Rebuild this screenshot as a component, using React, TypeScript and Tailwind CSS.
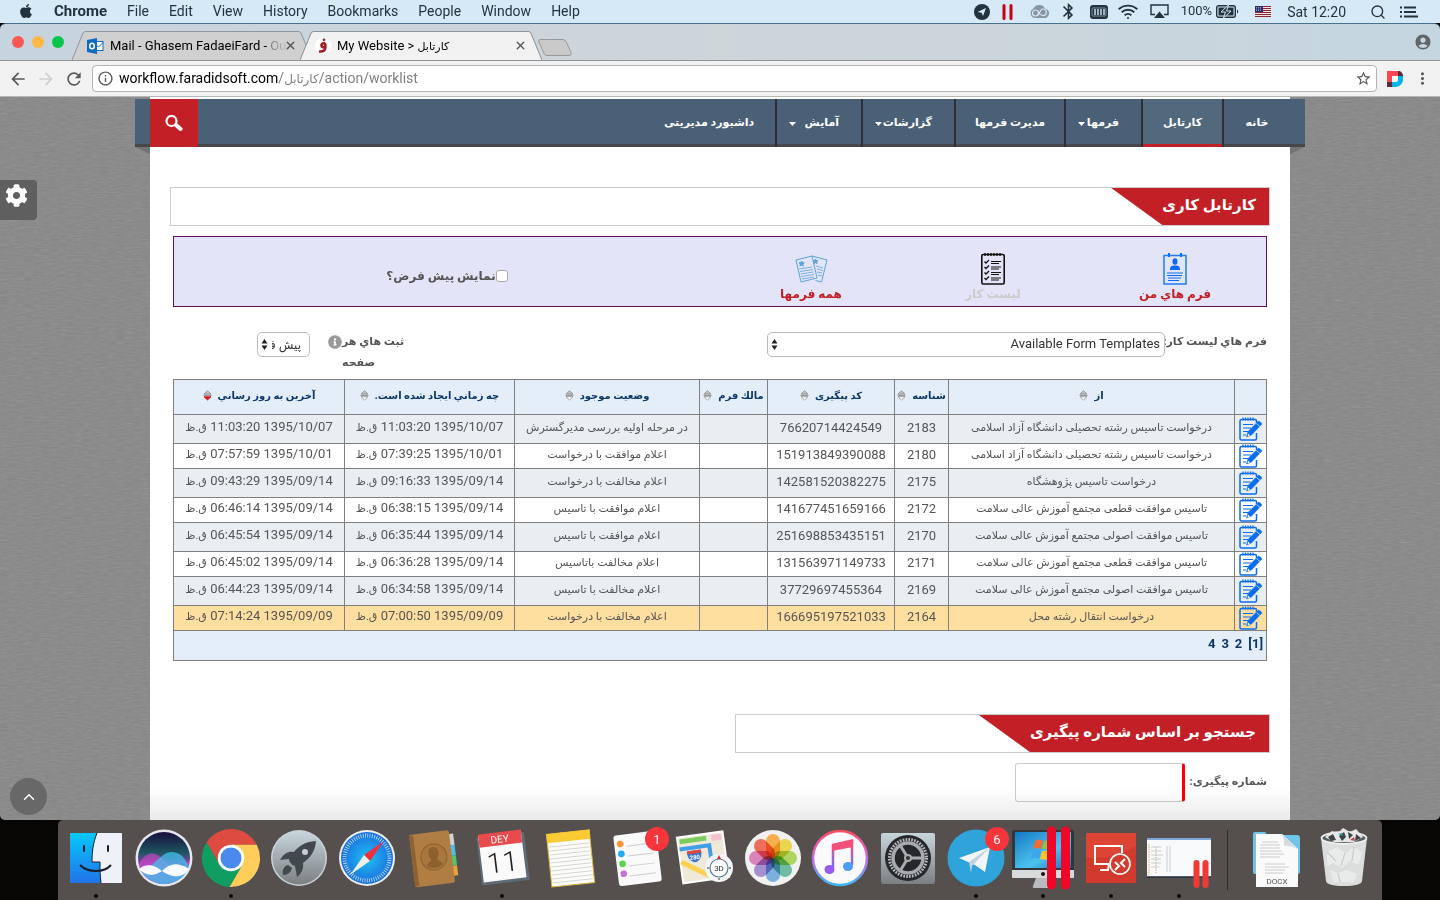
import type { ReactNode } from "react";
import { FaApple, FaCog, FaInfoCircle } from "react-icons/fa";
import {
  MdAccountCircle,
  MdArrowBack,
  MdArrowForward,
  MdBluetooth,
  MdInfoOutline,
  MdMoreVert,
  MdRefresh,
  MdStarBorder,
} from "react-icons/md";
import { ChevronUp, Search, X } from "lucide-react";

const menus = ["File", "Edit", "View", "History", "Bookmarks", "People", "Window", "Help"];

const navItems = [
  { label: "خانه", width: "w-[83px]" },
  { label: "کارتابل", width: "w-[81px]", active: true },
  { label: "فرمها", width: "w-[77px]", menu: true },
  { label: "مدیرت فرمها", width: "w-[110px]" },
  { label: "گزارشات", width: "w-[93px]", menu: true },
  { label: "آمایش", width: "w-[86px]", menu: true },
  { label: "داشبورد مدیریتی", width: "w-[132px]" },
];

const columns = [
  { title: "", width: "w-[32px]" },
  { title: "از", width: "" },
  { title: "شناسه", width: "w-[54px]" },
  { title: "کد پیگیری", width: "w-[127px]" },
  { title: "مالك فرم", width: "w-[68px]" },
  { title: "وضعيت موجود", width: "w-[185px]" },
  { title: "چه زماني ايجاد شده است.", width: "w-[170px]" },
  { title: "آخرين به روز رساني", width: "w-[171px]", sorted: true },
];

const rows = [
  ["درخواست تاسیس رشته تحصیلی دانشگاه آزاد اسلامی", "2183", "76620714424549", "در مرحله اولیه بررسی مدیرگسترش", "1395/10/07 11:03:20", "1395/10/07 11:03:20"],
  ["درخواست تاسیس رشته تحصیلی دانشگاه آزاد اسلامی", "2180", "151913849390088", "اعلام موافقت با درخواست", "1395/10/01 07:39:25", "1395/10/01 07:57:59"],
  ["درخواست تاسیس پژوهشگاه", "2175", "142581520382275", "اعلام مخالفت با درخواست", "1395/09/14 09:16:33", "1395/09/14 09:43:29"],
  ["تاسیس موافقت قطعی مجتمع آموزش عالی سلامت", "2172", "141677451659166", "اعلام موافقت با تاسیس", "1395/09/14 06:38:15", "1395/09/14 06:46:14"],
  ["تاسیس موافقت اصولی مجتمع آموزش عالی سلامت", "2170", "251698853435151", "اعلام موافقت با تاسیس", "1395/09/14 06:35:44", "1395/09/14 06:45:54"],
  ["تاسیس موافقت قطعی مجتمع آموزش عالی سلامت", "2171", "131563971149733", "اعلام مخالفت باتاسیس", "1395/09/14 06:36:28", "1395/09/14 06:45:02"],
  ["تاسیس موافقت اصولی مجتمع آموزش عالی سلامت", "2169", "37729697455364", "اعلام مخالفت با تاسیس", "1395/09/14 06:34:58", "1395/09/14 06:44:23"],
  ["درخواست انتقال رشته محل", "2164", "166695197521033", "اعلام مخالفت با درخواست", "1395/09/09 07:00:50", "1395/09/09 07:14:24"],
];

/* ---------- menu bar ---------- */

const MenuBar = () => (
  <header className="flex h-[23px] shrink-0 items-center justify-between bg-[#d6e9f6] pr-[22px] pl-[18px] text-sm text-[#22333f]">
    <div className="flex items-center gap-5">
      <FaApple size={16} />
      <span className="text-[15px] font-bold">Chrome</span>
      {menus.map((menu) => (
        <span key={menu}>{menu}</span>
      ))}
    </div>
    <div className="flex items-center">
      <svg width="16" height="16" viewBox="0 0 16 16">
        <circle cx="8" cy="8" r="8" fill="#22333f" />
        <path d="M3.6 8 12 4 9 12 7.6 8.8Z" fill="#d6e9f6" />
      </svg>
      <svg className="ml-3" width="11" height="16" viewBox="0 0 11 16">
        <path d="M2 1.5v13M9 1.5v13" stroke="#c80010" strokeWidth="3" strokeLinecap="round" />
      </svg>
      <svg className="ml-4" width="20" height="14" viewBox="0 0 20 14" fill="none">
        <path d="M6 13a5 5 0 0 1-1.500-9.500A6.500 6.500 0 0 1 16 3.500a4.800 4.800 0 0 1-1.500 9.500Z" fill="#8695a1" />
        <circle cx="6.500" cy="8" r="3" stroke="#d6e9f6" strokeWidth="1.200" />
        <path d="M8 10.500c3 0 2-6.500 6-6.500a3.300 3.300 0 1 1 0 6.600c-2 0-3-1.200-4-2.600" stroke="#d6e9f6" strokeWidth="1.200" />
      </svg>
      <MdBluetooth className="ml-2.5" size={19} />
      <svg className="ml-3" width="18" height="14" viewBox="0 0 18 14">
        <rect width="18" height="14" rx="3" fill="#22333f" />
        <rect x="2" y="3" width="14" height="8" rx="1" fill="none" stroke="#8fa3b1" strokeWidth=".8" />
        <path d="M5 4v6M8 4v6M11 4v6M14 4v6" stroke="#d6e9f6" strokeWidth="1.400" />
      </svg>
      <svg className="ml-2.5" width="20" height="16" viewBox="0 0 20 16" fill="none" stroke="#22333f" strokeWidth="1.900">
        <path d="M.7 5.300a13.500 13.500 0 0 1 18.600 0M3.700 8.300a9.200 9.200 0 0 1 12.600 0M6.700 11.200a4.900 4.900 0 0 1 6.600 0" />
        <circle cx="10" cy="14" r="1" fill="#22333f" stroke="none" />
      </svg>
      <svg className="ml-3" width="19" height="15" viewBox="0 0 19 15">
        <path d="M5 10.500H1V1h17v9.500h-4" fill="none" stroke="#22333f" strokeWidth="1.400" />
        <path d="M9.500 7.500 15 14H4Z" fill="#22333f" />
      </svg>
      <span className="ml-3 text-[13px]">100%</span>
      <svg className="ml-1" width="23" height="13" viewBox="0 0 23 13">
        <rect x=".7" y=".7" width="18.600" height="11.600" rx="2" fill="none" stroke="#22333f" strokeWidth="1.400" />
        <rect x="2.500" y="2.500" width="15" height="8" fill="#22333f" />
        <path d="M12.500 0 5 7h4.500L7.500 13 15 6h-4.500Z" fill="#22333f" stroke="#d6e9f6" strokeWidth="1" />
        <path d="M21 4.500v4c1.500-.5 1.500-3.500 0-4" fill="#22333f" />
      </svg>
      <svg className="ml-4" width="16" height="11" viewBox="0 0 16 11">
        <rect width="16" height="11" fill="#f3e4e6" />
        <path d="M0 .5h16M0 2.500h16M0 4.500h16M0 6.500h16M0 8.500h16M0 10.500h16" stroke="#8d2634" />
        <rect width="8" height="6" fill="#2b2f6b" />
        <path d="M1 1.500h6M1 3h6M1 4.500h6" stroke="#c9cbe6" strokeWidth=".7" strokeDasharray="1 1" />
      </svg>
      <span className="ml-4">Sat 12:20</span>
      <Search className="ml-6" size={16} strokeWidth={2} />
      <svg className="ml-3.5" width="18" height="12" viewBox="0 0 18 12" stroke="#22333f" strokeWidth="1.800">
        <path d="M0 1.500h2M4 1.500h12M0 6h2M4 6h12M0 10.500h2M4 10.500h14" />
      </svg>
    </div>
  </header>
);

/* ---------- browser chrome ---------- */

const BrowserTab = ({ active, icon, children }: { active?: boolean; icon: ReactNode; children: ReactNode }) => (
  <div className={active ? "relative z-10 -ml-3 h-[29px] w-[242px]" : "relative h-[29px] w-[240px]"}>
    <svg className="absolute inset-0 h-full w-full" viewBox="0 0 240 29" preserveAspectRatio="none">
      <path d="M0 29 11 2Q12 .5 14 .5H226Q228 .5 229 2L240 29" fill={active ? "#f2f2f2" : "#d0d0d0"} stroke="#8f9498" />
    </svg>
    <div className="relative flex h-full items-center gap-1.5 px-[15px] text-[13px] whitespace-nowrap text-black">
      {icon}
      <span className="min-w-0 flex-1">{children}</span>
      <button aria-label="Close tab" className="text-[#555]">
        <X size={13} strokeWidth={2.5} />
      </button>
    </div>
  </div>
);

const OutlookIcon = () => (
  <svg className="shrink-0" width="17" height="16" viewBox="0 0 17 16">
    <rect x="8" y="3.500" width="8" height="9" fill="#fff" stroke="#0a6cc0" />
    <path d="m9 7 2.500 2L16 4.500" fill="none" stroke="#0a6cc0" />
    <path d="M0 2 10 0v16L0 14Z" fill="#0a6cc0" />
    <ellipse cx="5" cy="8" rx="2.300" ry="2.800" fill="none" stroke="#fff" strokeWidth="1.500" />
  </svg>
);

const SiteIcon = () => (
  <svg className="shrink-0" width="16" height="16" viewBox="0 0 16 16">
    <circle cx="8" cy="8" r="8" fill="#fff" />
    <path d="M10 8.500a2 2 0 1 1 .3-2C11 12 9 14 4 13.500" fill="none" stroke="#a31d21" strokeWidth="2.600" />
    <circle cx="9" cy="1.800" r="1.400" fill="#a31d21" />
  </svg>
);

const BrowserChrome = () => (
  <div className="shrink-0">
    <div className="flex h-[37px] items-end rounded-t-md border-t border-[#4a708f] bg-linear-to-r from-[#c6d4df] via-[#cfd5d9] to-[#c5d6e0]">
      <div className="flex gap-2 self-center pl-3">
        <button aria-label="Close window" className="size-3 rounded-full bg-[#fc5753]" />
        <button aria-label="Minimize window" className="size-3 rounded-full bg-[#fdb84a]" />
        <button aria-label="Zoom window" className="size-3 rounded-full bg-[#05c64c]" />
      </div>
      <div className="ml-2 flex items-end">
        <BrowserTab icon={<OutlookIcon />}>
          Mail - Ghasem FadaeiFard - <span className="bg-linear-to-r from-[#777] to-[#c4c4c4] bg-clip-text text-transparent">Ou</span>
        </BrowserTab>
        <BrowserTab active icon={<SiteIcon />}>
          My Website &gt; <span dir="rtl" className="text-[11px]">کارتابل</span>
        </BrowserTab>
        <button aria-label="New tab" className="-ml-1 mb-1">
          <svg width="34" height="17" viewBox="0 0 34 17">
            <path d="M2 .5h23q2 0 3 2l5 11q1 3-2 3H9q-2 0-3-2L1 3Q0 .5 2 .5Z" fill="#cacaca" stroke="#969a9d" />
          </svg>
        </button>
      </div>
      <MdAccountCircle className="mr-2 ml-auto self-center text-[#626668]" size={18} />
    </div>
    <div className="flex h-[37px] items-center border-y border-t-[#8f9498] border-b-[#b6b6b6] bg-[#f2f2f2] px-2 text-[#5a5a5a]">
      <button aria-label="Back"><MdArrowBack size={20} /></button>
      <button aria-label="Forward" className="ml-2 text-[#d0d0d0]"><MdArrowForward size={20} /></button>
      <button aria-label="Reload" className="ml-2"><MdRefresh size={20} /></button>
      <div className="ml-2 flex h-[27px] flex-1 items-center rounded border border-[#b4b4b4] bg-white px-1">
        <MdInfoOutline size={17} />
        <span className="ml-[5px] flex-1 text-[14px] text-[#808080]">
          <span className="text-black">workflow.faradidsoft.com</span>/<span className="text-[12px]">کارتابل</span>/action/worklist
        </span>
        <MdStarBorder size={17} />
      </div>
      <svg className="ml-2.5" width="16" height="16" viewBox="0 0 16 16">
        <path d="M0 0h11v6H5v6H0Z" fill="#f9484f" />
        <path d="M11 0c3 0 5 2 5 5h-5Z" fill="#5b2b31" />
        <path d="M0 11h5v5H0Z" fill="#5b2b31" />
        <path d="M5 16v-5h3q3 0 3-3V5h5c1 6-2 11-8 11Z" fill="#00b4ea" />
        <path d="M5 5h6v3q0 3-3 3H5Z" fill="#fff" />
      </svg>
      <button aria-label="Browser menu" className="ml-2.5"><MdMoreVert size={19} /></button>
    </div>
  </div>
);

/* ---------- page ---------- */

const Caret = () => (
  <svg className="shrink-0" width="7" height="4" viewBox="0 0 7 4" fill="currentColor">
    <path d="M0 0h7L3.500 4Z" />
  </svg>
);

const SiteNav = () => (
  <nav className="relative mx-auto w-full max-w-[1170px]">
    <div className="flex h-12 justify-between border-b-[3px] border-[#47474b] bg-[#4a6076] pl-[15px]">
      <ul className="flex h-12 text-[11px] font-bold text-white">
        {navItems.map((item, i) => (
          <li
            key={item.label}
            className={`${item.width} ${i < 6 ? "border-l-2 border-[#2b2f36]" : ""} ${
              item.active ? "bg-[#52687d]" : ""
            } ${i === 0 ? "pr-[15px]" : ""}`}
          >
            <a
              href="#"
              className={`flex h-12 items-center border-b-[3px] pt-1 ${
                item.active ? "border-[#c22026]" : "border-[#47474b]"
              } ${item.menu ? "justify-between pr-[22px] pl-3" : "justify-center"}`}
            >
              <span className="whitespace-nowrap">{item.label}</span>
              {item.menu && <Caret />}
            </a>
          </li>
        ))}
      </ul>
      <button aria-label="جستجو" className="grid size-12 place-items-center bg-[#c22026]">
        <svg width="18" height="17" viewBox="0 0 18 17" fill="none" stroke="#fff">
          <circle cx="6.500" cy="6" r="5" strokeWidth="2.200" />
          <path d="m11 10 4.500 4" strokeWidth="4" strokeLinecap="round" />
        </svg>
      </button>
    </div>
    {/* folded ribbon ends */}
    <div className="flex justify-between text-[#737375]">
      <svg width="15" height="7" viewBox="0 0 15 7" fill="currentColor"><path d="M0 0h15L0 7Z" /></svg>
      <svg width="15" height="7" viewBox="0 0 15 7" fill="currentColor"><path d="M0 0h15v7Z" /></svg>
    </div>
  </nav>
);

const SectionTitle = ({ children }: { children: ReactNode }) => (
  <div className="flex h-[39px] border border-[#ccc] bg-white">
    <h2 className="flex items-center bg-[#c22026] pr-[13px] pb-0.5 pl-[51px] text-[15px] font-bold whitespace-nowrap text-white [clip-path:polygon(0_0,100%_0,100%_100%,51px_100%)]">
      {children}
    </h2>
  </div>
);

const MyFormsIcon = () => (
  <svg width="24" height="33" viewBox="0 0 24 33" fill="#0a6cf0">
    <path d="M1 3.500h22V32H1Z" fill="none" stroke="#1f7cf2" strokeWidth="1.500" />
    <rect x="5" y="1" width="2" height="4" />
    <rect x="17" y="1" width="2" height="4" />
    <ellipse cx="12" cy="9.500" rx="2.500" ry="3.200" />
    <path d="M7 18c0-4 2-4.500 5-4.500s5 .5 5 4.500Z" />
    <path d="M4 21h16M4 23.500h15M5 26h13M5 28.500h11" stroke="#0a6cf0" strokeWidth="1.200" />
  </svg>
);

const WorkListIcon = () => (
  <svg width="24" height="33" viewBox="0 0 24 33" fill="none" stroke="#111">
    <rect x=".8" y="2.500" width="22.400" height="29.500" rx="1.500" strokeWidth="1.600" />
    <path d="M4 1v3M7 1v3M10 1v3M13 1v3M16 1v3M19 1v3" strokeWidth="1.400" />
    <path d="m3.500 9.500 1.500 1.500 3-3M3.500 15l1.500 1.500 3-3M3.500 20.500 5 22l3-3M3.500 26 5 27.500l3-3" strokeWidth="1.300" />
    <path d="M10 9.500h10M10 11.500h8M10 15h10M10 17h8M10 20.500h10M10 22.500h8M10 26h10M10 28h8" strokeWidth="1.100" />
  </svg>
);

const AllFormsIcon = () => (
  <svg width="33" height="33" viewBox="0 0 33 33" fill="none" stroke="#5ba3d6" strokeWidth="1">
    <path d="m1 8 16-4 5 22-16 4Z" />
    <path d="m17 4 15 4-5.500 22-6-1.500" />
    <path d="m4 17 13-2M5 19.500l13-2M5.500 22l13-2M6 24.500l13-2M7 27l12-2M21 14l7 2M22 17l6 1.500M22 20l5 1M23 23l4 1" strokeWidth=".8" />
    <path d="m6.500 9 .8 1.700 2 .1-1.500 1.300.5 2-1.700-1-1.700 1 .5-2L4 10.800l1.800-.1Z" fill="#5ba3d6" />
    <path d="m20.500 7 .7 1.500 1.800.2-1.400 1.200.4 1.700-1.500-.9-1.500.9.400-1.700-1.400-1.200 1.800-.2Z" fill="#5ba3d6" />
  </svg>
);

const EditIcon = () => (
  <svg className="mx-auto block" width="24" height="24" viewBox="0 0 24 24" fill="none" stroke="#0a6cf0">
    <path d="M17.500 16v5.500q0 1.500-1.500 1.500H2.500Q1 23 1 21.500V4q0-1.500 1.500-1.500H16q1.500 0 1.500 1.500v2" strokeWidth="1.500" />
    <path d="M4 .5v3M6.500.5v3M9 .5v3M11.500.5v3M14 .5v3" strokeWidth="1.200" />
    <path d="M4 7.500h10M4 11h8M4 14.500h5M4 18h3" strokeWidth="1.200" />
    <path d="m7.500 20 1.500-5.500L19.500 4q2 .5 3.500 3L12.500 18Z" fill="#0a6cf0" strokeWidth=".5" />
    <path d="m17.500 6.500 3.500 3" stroke="#fff" strokeWidth=".7" />
    <path d="m9 16.500 2 2-2.300.7Z" fill="#fff" stroke="none" />
  </svg>
);

const SortIcon = ({ sorted }: { sorted?: boolean }) => (
  <svg className="mr-1.5 inline-block" width="9" height="11" viewBox="0 0 9 11">
    <path d="M4.500.7 8 4H1Z" fill="#c4c4c4" stroke="#8c8c8c" strokeWidth=".8" />
    <path d="M.5 5.300h8" stroke="#777" strokeWidth=".9" />
    <path d="M1 6.700h7l-3.500 3.300Z" fill={sorted ? "#e01010" : "#fff"} stroke={sorted ? "#e01010" : "#8c8c8c"} strokeWidth=".8" />
  </svg>
);

const SelectArrows = () => (
  <svg className="pointer-events-none absolute top-[7px] left-1" width="7" height="11" viewBox="0 0 7 11" fill="#222">
    <path d="m3.500 0 3 4.500h-6ZM3.500 11l3-4.500h-6Z" />
  </svg>
);

const Toolbar = () => (
  <div className="mx-[3px] mt-2.5 grid h-[71px] grid-cols-6 border border-[#5b1160] bg-[#e4e4f9] text-[12px] font-bold">
    <a href="#" className="flex flex-col items-center pt-[15px] text-[#c22026]">
      <MyFormsIcon />
      <span className="leading-[18px]">فرم هاي من</span>
    </a>
    <a href="#" className="flex flex-col items-center pt-[15px] text-[#ccc]">
      <WorkListIcon />
      <span className="leading-[18px]">ليست كار</span>
    </a>
    <a href="#" className="flex flex-col items-center pt-[15px] text-[#c22026]">
      <AllFormsIcon />
      <span className="leading-[18px]">همه فرمها</span>
    </a>
    <div />
    <label className="flex items-center justify-center pt-2 whitespace-nowrap text-[#555]">
      <input type="checkbox" className="size-3 appearance-none rounded-[3px] border border-[#aaa] bg-white" />
      نمایش پیش فرض؟
    </label>
  </div>
);

const Filters = () => (
  <div className="mx-[3px] mt-6 flex h-12 items-start text-[11px] text-[#555]">
    <label htmlFor="templates" className="w-[102px] leading-[21px] font-bold whitespace-nowrap">فرم هاي ليست كار:</label>
    <div className="relative mt-px w-[398px]">
      <select id="templates" className="h-[25px] w-full appearance-none rounded-[5px] border border-[#bbb] bg-white pr-1 pb-px pl-4 text-[13px] text-[#333]">
        <option>Available Form Templates</option>
      </select>
      <SelectArrows />
    </div>
    <div className="flex-1" />
    <label htmlFor="page-size" className="w-[66px] text-left leading-[21px] font-bold">ثبت هاي هر صفحه</label>
    <FaInfoCircle className="mt-1 shrink-0 text-[#999]" size={14} />
    <div className="relative mt-px mr-[18px] ml-[84px] w-[53px]">
      <select id="page-size" className="h-[25px] w-full appearance-none rounded-[5px] border border-[#bbb] bg-white pr-2 pl-3.5 text-[12px] text-[#333]">
        <option>پیش فرض</option>
      </select>
      <SelectArrows />
    </div>
  </div>
);

const rowColor = (i: number) => {
  if (i === rows.length - 1) return "h-[25px] bg-[#ffdf9f]";
  return i % 2 ? "h-[25px] bg-white" : "h-[29px] bg-[#e9eef2]";
};

const cell = "border border-[#808080] p-0 pb-[3px]";

const DateCell = ({ children }: { children: ReactNode }) => (
  <td className={`${cell} whitespace-nowrap`}>
    {children} <span className="text-[11px]">ق.ظ</span>
  </td>
);

const WorkTable = () => (
  <div className="mx-[3px]">
    <table className="w-full table-fixed border-collapse text-center text-[13px] leading-[18px] text-[#555]">
      <colgroup>
        {columns.map((column, i) => (
          <col key={i} className={column.width} />
        ))}
      </colgroup>
      <thead>
        <tr className="h-[35px] bg-[#e3eef9]">
          {columns.map((column, i) => (
            <th key={i} className={`${cell} text-[10px] font-bold whitespace-nowrap text-[#0b3769]`}>
              {column.title}
              {column.title && <SortIcon sorted={column.sorted} />}
            </th>
          ))}
        </tr>
      </thead>
      <tbody>
        {rows.map(([from, id, code, status, created, updated], i) => (
          <tr key={id} className={rowColor(i)}>
            <td className="border border-[#808080] p-0">
              <button aria-label="ويرايش" className="block w-full"><EditIcon /></button>
            </td>
            <td className={`${cell} text-[11px] whitespace-nowrap`}>{from}</td>
            <td className={cell}>{id}</td>
            <td className={cell}>{code}</td>
            <td className={cell} />
            <td className={`${cell} text-[11px] whitespace-nowrap`}>{status}</td>
            <DateCell>{created}</DateCell>
            <DateCell>{updated}</DateCell>
          </tr>
        ))}
        <tr className="h-[30px] bg-[#e3eef9]">
          <td colSpan={8} className="border border-[#808080] px-[3px] pt-0 pb-[3px] font-bold text-[#0b3769]">
            <div className="flex gap-1.5">
              <span>[1]</span>
              <a href="#">2</a>
              <a href="#">3</a>
              <a href="#">4</a>
            </div>
          </td>
        </tr>
      </tbody>
    </table>
  </div>
);

const WebPage = () => (
  <div dir="rtl" className="relative flex min-h-0 flex-1 flex-col overflow-hidden bg-[#868686]">
    {/* woven background */}
    <svg className="absolute inset-0 h-full w-full opacity-20" aria-hidden="true">
      <filter id="linen">
        <feTurbulence type="fractalNoise" baseFrequency="0.12 0.6" numOctaves="2" />
        <feColorMatrix type="saturate" values="0" />
      </filter>
      <rect width="100%" height="100%" filter="url(#linen)" />
    </svg>
    <div className="relative mx-auto w-full max-w-[1140px] flex-1 bg-white pt-0.5">
      <div className="-mx-[15px]">
        <SiteNav />
      </div>
      <main className="px-5 pt-[33px]">
        <SectionTitle>کارتابل کاری</SectionTitle>
        <Toolbar />
        <Filters />
        <WorkTable />
        <section className="mt-[53px] w-[535px]">
          <SectionTitle>جستجو بر اساس شماره پیگیری</SectionTitle>
          <div className="mt-2.5 mr-[3px] flex items-center gap-[5px] text-[11px] font-bold text-[#555]">
            <label htmlFor="tracking">شماره پیگیری:</label>
            <input id="tracking" className="h-[39px] w-[170px] rounded-[3px] border border-r-[3px] border-[#ccc] border-r-[#ff0000] bg-white px-2" />
          </div>
        </section>
      </main>
      <div className="pointer-events-none absolute inset-x-0 bottom-0 h-8 bg-linear-to-t from-black/8 to-transparent" />
    </div>
    <button aria-label="تنظیمات" className="absolute top-[83px] left-0 flex h-10 w-[37px] items-start justify-center rounded-r bg-[#5f5f5f] pt-1 pr-1 text-white">
      <FaCog size={23} />
    </button>
    <button aria-label="بالا" className="absolute bottom-[5px] left-2.5 grid size-[37px] place-items-center rounded-full bg-[#686868] text-white">
      <ChevronUp size={18} />
    </button>
  </div>
);

/* ---------- dock ---------- */

const Badge = ({ x, children }: { x: number; children: ReactNode }) => (
  <g>
    <circle cx={x} cy="19" r="12" fill="#f8353b" />
    <text x={x} y="24" textAnchor="middle" fontSize="13" fill="#fff">{children}</text>
  </g>
);

const Finder = () => (
  <>
    <rect x="8" y="13" width="52" height="50" rx="1" fill="#eef2f8" />
    <path d="M8 13h27c-4 10-5 19-5 29h8c0 7 0 14 1 21H8Z" fill="url(#finderBlue)" />
    <path d="M22 26v5M46 26v5" stroke="#16202b" strokeWidth="2" strokeLinecap="round" />
    <path d="M18 45c8 8 24 8 31 0" fill="none" stroke="#16202b" strokeWidth="2" />
    <path d="M35 13c-4 10-5 19-5 29h8c0 7 0 14 1 21" fill="none" stroke="#16202b" strokeWidth="1" />
  </>
);

const Siri = () => (
  <>
    <circle cx="34" cy="38" r="28.500" fill="#e6e6ee" />
    <circle cx="34" cy="38" r="26" fill="url(#siri)" />
    <path d="M9 45C18 26 28 34 36 42S52 50 59 40C58 56 46 64 34 64S10 56 9 45Z" fill="#e04bd0" opacity=".55" />
    <path d="M10 48C20 54 30 31 42 32s14 10 17 14c-4 14-16 18-25 18S13 58 10 48Z" fill="#3ecbf0" opacity=".7" />
    <path d="M9 49c8-7 17-3 23 2 8-8 16-9 27-2-8 11-18 8-27 2-7 5-15 6-23-2Z" fill="#fff" opacity=".95" />
  </>
);

const blade = "M0-13.300H25.800A29 29 0 0 0-24.400-15.700L-11.500 6.650A13.300 13.300 0 0 1 0-13.300Z";

const ChromeLogo = () => (
  <g transform="translate(34 38)">
    <circle r="14" fill="#fff" />
    <path d={blade} fill="#dd4b41" />
    <path d={blade} fill="#0f9d62" transform="rotate(-120)" />
    <path d={blade} fill="#ffcd5a" transform="rotate(120)" />
    <circle r="10.500" fill="#4a89ee" />
  </g>
);

const Launchpad = () => (
  <>
    <circle cx="34" cy="38" r="28" fill="#c9d3d8" />
    <circle cx="34" cy="38" r="26.500" fill="url(#silver)" />
    <path d="M51 21c-12 1-17 5-22 11-5-1-10 1-14 8l9-1c0 3 3 6 6 7l2 11c4-3 7-8 6-14 7-5 12-11 13-22Z" fill="#43484d" />
    <path d="M23 45c-4 1-6 5-5 10 5 0 8-3 9-7" fill="#43484d" />
    <circle cx="40" cy="32" r="3" fill="#c6d0d4" />
  </>
);

const Safari = () => (
  <>
    <circle cx="34" cy="38" r="28" fill="#eef1f4" />
    <circle cx="34" cy="38" r="26" fill="url(#safari)" />
    <circle cx="34" cy="38" r="22.500" fill="none" stroke="#d8ecfb" strokeWidth="4" strokeDasharray=".7 1.600" />
    <path d="M51 21 37 41l-6-6Z" fill="#f0303a" />
    <path d="M17 55 31 35l6 6Z" fill="#eceff2" />
  </>
);

const Contacts = () => (
  <g transform="rotate(-7 34 38)">
    <path d="M50 16h6v12h-6Z" fill="#cfd3d4" />
    <path d="M50 27h6v11h-6Z" fill="#4cc0e8" />
    <path d="M50 38h6v10h-6Z" fill="#4fc76b" />
    <path d="M50 48h6v10h-6Z" fill="#eaa13a" />
    <rect x="12" y="12" width="40" height="53" rx="2" fill="#b07d42" />
    <path d="M12 13h4v51h-4Z" fill="#8e6230" />
    <circle cx="34" cy="37" r="13" fill="#a9773d" stroke="#8c612e" />
    <path d="M26 45c1-4 5-3 5-6-4-5-2-12 3-12s7 7 3 12c0 3 4 2 5 6q-8 6-16 0Z" fill="#8c612e" />
  </g>
);

const Calendar = () => (
  <g transform="rotate(-7 34 38)">
    <path d="M11 15h48v48H11Z" fill="#5c6b76" />
    <rect x="13" y="13" width="43" height="47" fill="#fafafa" />
    <path d="M13 12h43v13H13Z" fill="#e94b4d" />
    <text x="34" y="22.500" textAnchor="middle" fontSize="10" fill="#fff">DEY</text>
    <text x="34" y="52" textAnchor="middle" fontSize="28" fontWeight="300" fill="#222">11</text>
  </g>
);

const Notes = () => (
  <g transform="rotate(-6 34 38)">
    <rect x="13" y="12" width="43" height="53" fill="#fbfbf8" stroke="#d9b43c" />
    <path d="M13 12h43v9H13Z" fill="#fccb33" />
    <path d="M14 25h41M14 29h41M14 33h41M14 37h41M14 41h41M14 45h41M14 49h41M14 53h41M14 57h41M14 61h41" stroke="#cfcfcf" strokeWidth=".8" />
  </g>
);

const Reminders = () => (
  <>
    <g transform="rotate(-7 34 38)">
      <rect x="13" y="13" width="43" height="51" rx="3" fill="#fafafa" />
      <path d="M25 25h26M25 35h26M25 45h26M25 55h26" stroke="#ccc" />
      <circle cx="19" cy="22" r="3.300" fill="#ff9130" />
      <circle cx="19" cy="32" r="3.300" fill="#1badf8" />
      <circle cx="19" cy="42" r="3.300" fill="#55d545" />
      <circle cx="19" cy="52" r="3.300" fill="#c472d8" />
    </g>
    <Badge x={54}>1</Badge>
  </>
);

const Maps = () => (
  <>
    <g transform="rotate(-8 34 38)">
      <rect x="9" y="14" width="46" height="46" fill="#efe9da" stroke="#fff" strokeWidth="2" />
      <path d="M11 16h27v5H11Z" fill="#7ecb5f" />
      <path d="M43 16h10v6H43Z" fill="#f3c1cf" />
      <path d="M10 26h30v30" fill="none" stroke="#3f9ee6" strokeWidth="4" />
      <path d="M10 39 36 56" stroke="#fbd24d" strokeWidth="5" />
      <path d="M17 29h14c1 8-3 11-7 12-4-1-8-5-7-12Z" fill="#3c77d0" />
      <path d="M17 29h14v3H17Z" fill="#e2473f" />
      <text x="24" y="38" textAnchor="middle" fontSize="6" fontWeight="700" fill="#fff">280</text>
    </g>
    <circle cx="48" cy="48" r="14" fill="#f4f6f8" />
    <circle cx="48" cy="48" r="9" fill="#fff" stroke="#5a7c95" strokeWidth="1.200" />
    <path d="m48 35 2 4h-4Z" fill="#e02a2a" />
    <path d="M36 48h2M58 48h2M48 58v2" stroke="#333" />
    <text x="48" y="51" textAnchor="middle" fontSize="8" fill="#333">3D</text>
  </>
);

const petals = ["#f7a63b", "#e8d23c", "#a9d14f", "#5fb79a", "#6fa9dc", "#9b84cf", "#d878b4", "#ee5f4c"];

const Photos = () => (
  <>
    <circle cx="34" cy="38" r="28" fill="#f1f1f1" />
    <g className="isolate">
      {petals.map((color, i) => (
        <rect
          key={color}
          x="27"
          y="14"
          width="14"
          height="24"
          rx="7"
          fill={color}
          opacity=".9"
          className="mix-blend-multiply"
          transform={`rotate(${i * 45} 34 38)`}
        />
      ))}
    </g>
  </>
);

const Music = () => (
  <>
    <circle cx="34" cy="38" r="27" fill="#fafafc" stroke="url(#music)" strokeWidth="2.500" />
    <path d="M27 48V25l19-4v24" fill="none" stroke="url(#note)" strokeWidth="2.500" />
    <path d="M26 24l21-5v8l-21 4Z" fill="#f2507b" />
    <ellipse cx="23.500" cy="49.500" rx="5" ry="4.500" fill="#9a5bf0" />
    <ellipse cx="42" cy="46.500" rx="5" ry="4.500" fill="#4b9df5" />
  </>
);

const Settings = () => (
  <>
    <rect x="7" y="13" width="54" height="51" rx="2" fill="url(#silver)" />
    <circle cx="34" cy="38" r="23" fill="#25272a" />
    <circle cx="34" cy="38" r="18.500" fill="none" stroke="#b9bcbf" strokeWidth="3" strokeDasharray="1.700 1.200" />
    <circle cx="34" cy="38" r="15" fill="none" stroke="#a7abae" strokeWidth="3.500" />
    <path d="M34 38h15M34 38l-8-13M34 38l-8 13" stroke="#a7abae" strokeWidth="3" />
    <circle cx="34" cy="38" r="4" fill="#a7abae" />
    <circle cx="34" cy="38" r="2" fill="#333" />
  </>
);

const Telegram = () => (
  <>
    <circle cx="34" cy="38" r="28.500" fill="#2fa4da" />
    <path d="M17 38 48 27 43 52 33 45Z" fill="#f2f6f9" />
    <path d="m27 42 21-15-18 19-1 7Z" fill="#bfd3e0" />
    <Badge x={55}>6</Badge>
  </>
);

const Parallels = () => (
  <>
    <rect x="3" y="10" width="62" height="41" rx="2" fill="#33373a" />
    <path d="M6 12h56v36H6Z" fill="url(#desktop)" />
    <path d="M3 50h62v7q0 1-1 1H4q-1 0-1-1Z" fill="#d8dadb" />
    <path d="M27 58h14l3 8q1 2-2 2H26q-3 0-2-2Z" fill="#b9bcbe" />
    <circle cx="34" cy="54" r="2" fill="#111" />
    <path d="M26 21q5-3 8 0l-2 8q-4-2-8 0Z" fill="#f06b35" />
    <path d="m35 21 8-1-2 9h-8Z" fill="#8cc63f" />
    <path d="M24 31q4-2 8 0l-2 8q-4-3-8 0Z" fill="#3aa5ec" />
    <path d="M33 31h8l-2 9-8-1Z" fill="#fbc52c" />
    <path d="M42.500 11v54M56.500 11v54" stroke="#f00626" strokeWidth="9" strokeLinecap="round" />
  </>
);

const RemoteDesktop = () => (
  <>
    <rect x="9" y="13" width="50" height="50" rx="1" fill="#dd4434" />
    <path d="M9 38q28 2 50-12v37H9Z" fill="#cb3428" opacity=".6" />
    <path d="M32 44H18V26h27v7M23 50h9M32 44l-1 6" fill="none" stroke="#fff" strokeWidth="2" />
    <circle cx="43" cy="44" r="10" fill="#d23c2e" stroke="#fff" strokeWidth="1.600" />
    <path d="m38 42 4 4-4 4M48 39l-4 4 4 4" fill="none" stroke="#fff" strokeWidth="2" />
  </>
);

const RemoteWindow = () => (
  <>
    <rect x="2" y="18" width="64" height="39" fill="#f8f9fa" />
    <path d="M2 18h64v2H2Z" fill="#7ca6d6" />
    <path d="M2 57h64" stroke="#1c2a3a" strokeWidth="1.500" />
    <path d="M4 24v31M11 27v26" stroke="#d9c98e" strokeWidth="1.500" strokeDasharray="1.500 1" />
    <path d="M6 27h10M6 31h10M6 35h12M6 39h10M6 43h10M6 47h8M22 26v26M25 26v26" stroke="#c9ced4" strokeWidth="1" />
    <path d="M51.500 43v22M60.500 43v22" stroke="#f23a35" strokeWidth="6" strokeLinecap="round" />
  </>
);

const Documents = () => (
  <>
    <path d="M10 14q0-2 2-2h10l3 3h29q3 0 3 3v34q0 2-2 2H12q-2 0-2-2Z" fill="#70c4ea" />
    <path d="M13 14h26l16 15v38H13Z" fill="#fafafa" />
    <path d="M39 14q3 8 2 12 7-1 14 4Z" fill="#d6d9db" />
    <path d="M19 22h16M17 25h20M17 28h20M17 31h22M17 34h24M17 37h20M22 44h20M22 47h24M22 50h20M22 53h18" stroke="#c0c0c0" strokeWidth=".8" />
    <text x="34" y="64" textAnchor="middle" fontSize="8" fill="#555">DOCX</text>
  </>
);

const Trash = () => (
  <>
    <path d="M11 18h46l-5 43q-1 5-18 5t-18-5Z" fill="#dcdddd" />
    <path d="m17 32 10-5 8 6 9-6 8 5-3 13-9-4-8 7-9-5-6 3ZM20 50l8 3 9-3 10 4-3 8H23Z" fill="#e9eaea" />
    <path d="m17 32 9 9M35 33l-4 13M44 27l-2 14M28 53l2 9" stroke="#c9cbcc" strokeWidth="1.200" />
    <ellipse cx="34" cy="18" rx="22.500" ry="6" fill="#596063" stroke="#eef0f0" strokeWidth="1.800" />
    <path d="m15 17 7-6 6 2 5-5 7 4 6-3 7 8-9 5H24Z" fill="#e6e8e8" />
    <path d="m18 17 5-3 3 6-5 1ZM29 16l5-4 2 5-4 4ZM38 12l5 3-4 4ZM46 14l5 4-6 3Z" fill="#3d4549" />
    <path d="m28 14 4-1 1 3Z" fill="#2f9e8f" />
    <path d="m40 20 4-3 1 4Z" fill="#c0453f" />
  </>
);

const apps = [
  { name: "Finder", art: <Finder />, running: true },
  { name: "Siri", art: <Siri /> },
  { name: "Chrome", art: <ChromeLogo />, running: true },
  { name: "Launchpad", art: <Launchpad /> },
  { name: "Safari", art: <Safari /> },
  { name: "Contacts", art: <Contacts /> },
  { name: "Calendar", art: <Calendar />, running: true },
  { name: "Notes", art: <Notes /> },
  { name: "Reminders", art: <Reminders /> },
  { name: "Maps", art: <Maps /> },
  { name: "Photos", art: <Photos /> },
  { name: "iTunes", art: <Music /> },
  { name: "System Preferences", art: <Settings /> },
  { name: "Telegram", art: <Telegram />, running: true },
  { name: "Parallels Desktop", art: <Parallels />, running: true },
  { name: "Remote Desktop", art: <RemoteDesktop />, running: true },
  { name: "Windows Explorer", art: <RemoteWindow />, running: true },
];

const DockItem = ({ name, art, running }: { name: string; art: ReactNode; running?: boolean }) => (
  <button aria-label={name} className="flex min-w-0 flex-1 justify-center">
    <svg className="shrink-0" width="68" height="80" viewBox="0 0 68 80">
      {art}
      {running && <circle cx="34" cy="76" r="2" fill="#0a0a0a" />}
    </svg>
  </button>
);

const Dock = () => (
  <footer className="mx-[58px] flex h-20 shrink-0 rounded-t-[5px] bg-[#55504e] px-1">
    <svg width="0" height="0" className="absolute">
      <defs>
        <linearGradient id="finderBlue" x2="0" y2="1">
          <stop stopColor="#05c8fb" />
          <stop offset="1" stopColor="#2273ea" />
        </linearGradient>
        <linearGradient id="siri" x2="0" y2="1">
          <stop stopColor="#17103a" />
          <stop offset=".4" stopColor="#1d5560" />
          <stop offset=".6" stopColor="#8a3fb0" />
          <stop offset="1" stopColor="#2c5fb5" />
        </linearGradient>
        <linearGradient id="silver" x2="0" y2="1">
          <stop stopColor="#c6d6dc" />
          <stop offset="1" stopColor="#7b7f82" />
        </linearGradient>
        <radialGradient id="safari">
          <stop stopColor="#1fc0f2" />
          <stop offset="1" stopColor="#1a6fe0" />
        </radialGradient>
        <linearGradient id="desktop" x2="1" y2="1">
          <stop stopColor="#1579c4" />
          <stop offset=".6" stopColor="#4cc3ee" />
          <stop offset="1" stopColor="#1a6fc0" />
        </linearGradient>
        <linearGradient id="music" x2="0" y2="1">
          <stop stopColor="#fb4e62" />
          <stop offset=".5" stopColor="#c968e0" />
          <stop offset="1" stopColor="#3cb8f5" />
        </linearGradient>
        <linearGradient id="note" x2="0" y2="1">
          <stop stopColor="#f94f6d" />
          <stop offset="1" stopColor="#6a73f5" />
        </linearGradient>
      </defs>
    </svg>
    {apps.map((app) => (
      <DockItem key={app.name} {...app} />
    ))}
    <div className="flex w-[30px] shrink-0 items-center justify-center">
      <div className="h-[60px] w-px bg-[#2f2c2b]" />
    </div>
    <DockItem name="Documents" art={<Documents />} />
    <DockItem name="Trash" art={<Trash />} />
  </footer>
);

export default function App() {
  return (
    <div className="flex h-screen flex-col overflow-hidden bg-[#070605] font-['Roboto','DejaVu_Sans',sans-serif]">
      <MenuBar />
      <div className="flex min-h-0 flex-1 flex-col overflow-hidden rounded-b-[5px]">
        <BrowserChrome />
        <WebPage />
      </div>
      <Dock />
    </div>
  );
}
